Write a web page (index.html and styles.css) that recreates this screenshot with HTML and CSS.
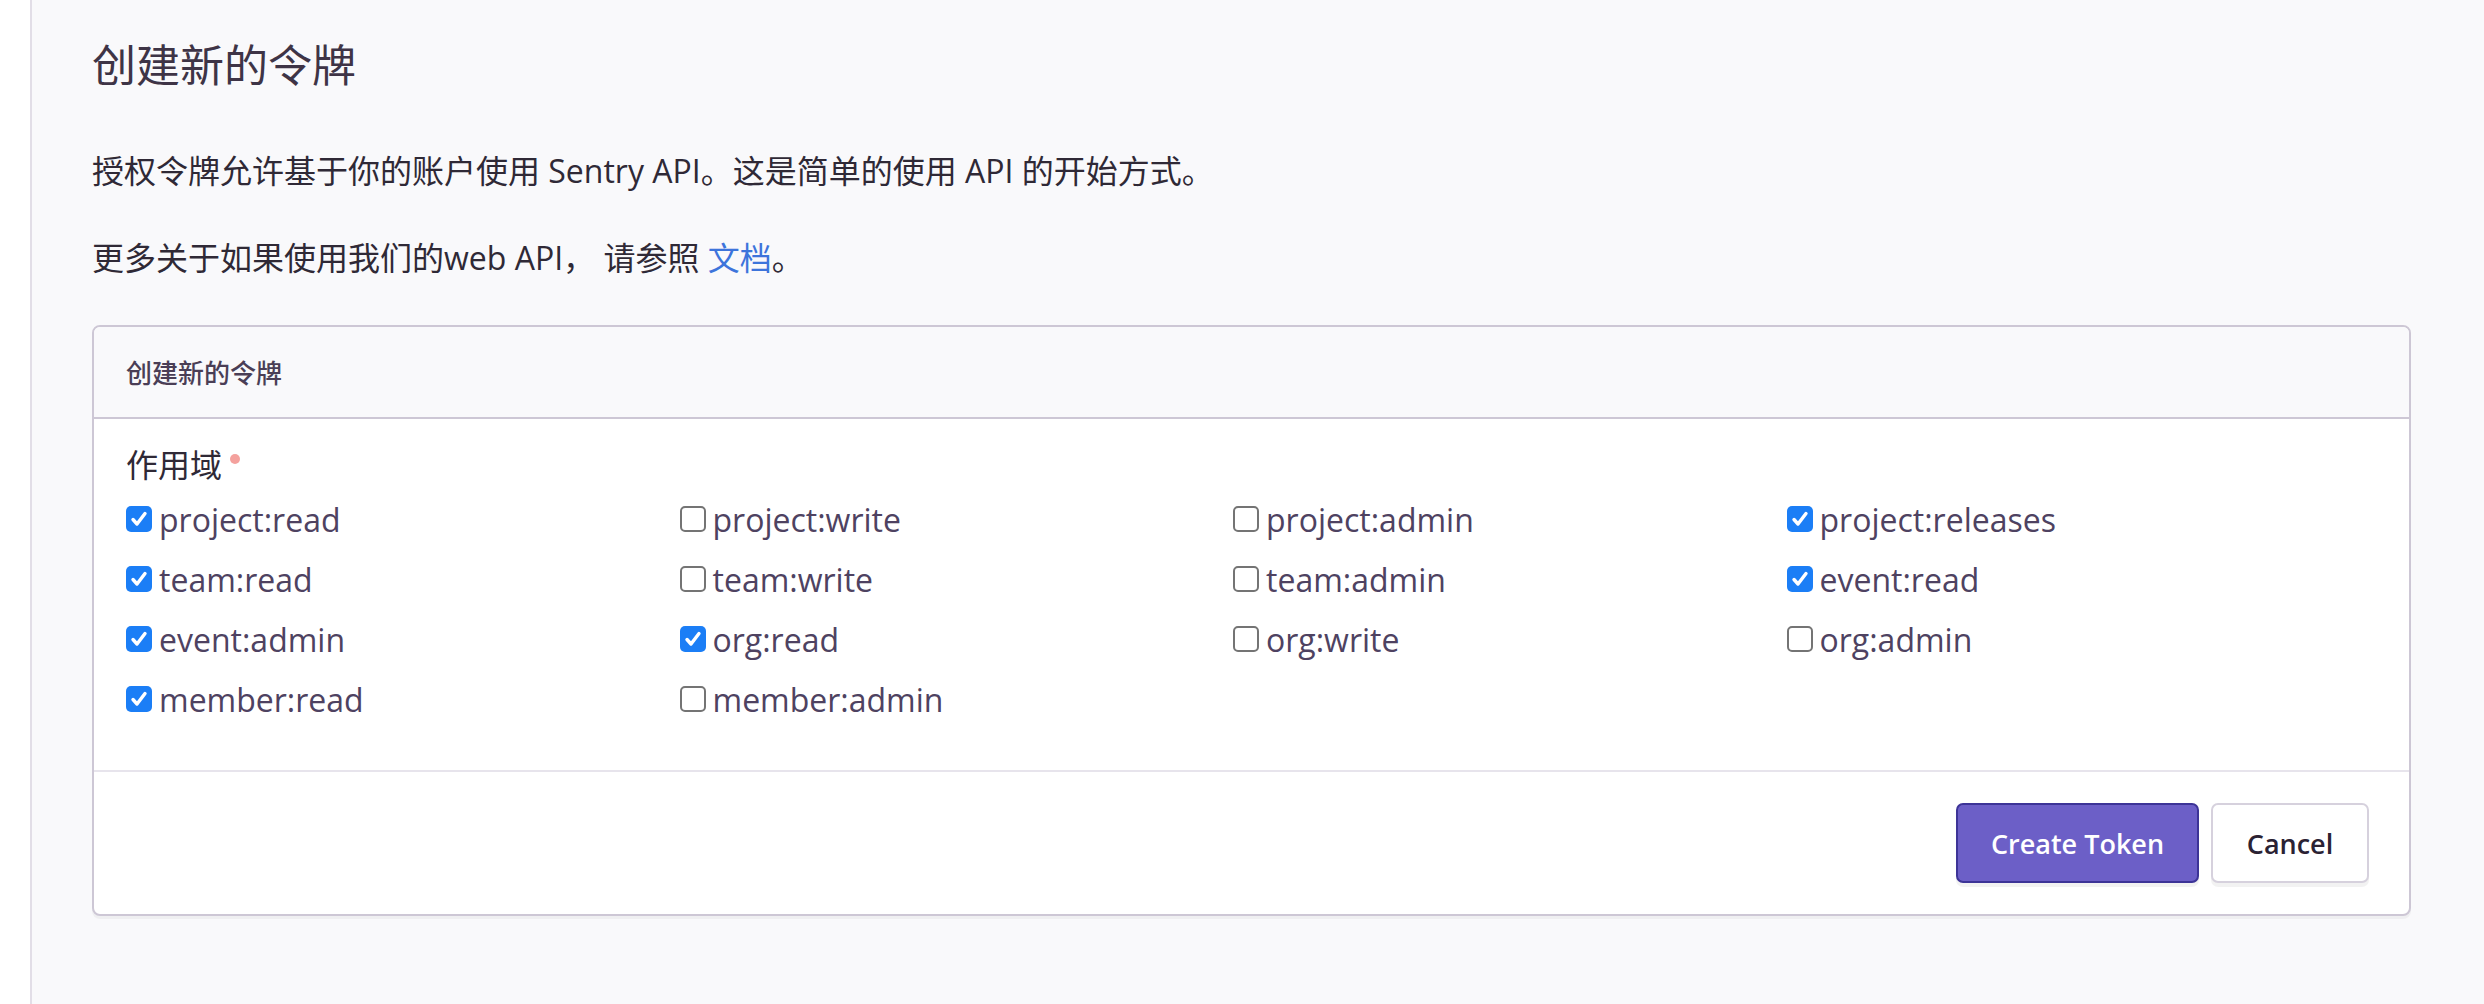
FILE: index.html
```html
<!DOCTYPE html>
<html lang="zh-CN">
<head>
<meta charset="utf-8">
<title>创建新的令牌</title>
<link rel="stylesheet" href="styles.css">
</head>
<body>
<div class="layout">
  <div class="gutter"></div>
  <main class="main">
    <h1 class="page-title">创建新的令牌</h1>
    <p class="text">授权令牌允许基于你的账户使用 Sentry API。这是简单的使用 API 的开始方式。</p>
    <p class="text text-last">更多关于如果使用我们的web API， 请参照 <a class="link" href="#">文档</a>。</p>

    <section class="panel">
      <header class="panel-header">创建新的令牌</header>
      <div class="panel-body">
        <div class="field-label">作用域<span class="required"></span></div>
        <div class="scopes">
          <label class="scope"><span class="box checked"><svg viewBox="0 0 26 26"><path d="M7 13.5 L11 18 L19 7.5" /></svg></span>project:read</label>
          <label class="scope"><span class="box"></span>project:write</label>
          <label class="scope"><span class="box"></span>project:admin</label>
          <label class="scope"><span class="box checked"><svg viewBox="0 0 26 26"><path d="M7 13.5 L11 18 L19 7.5" /></svg></span>project:releases</label>

          <label class="scope"><span class="box checked"><svg viewBox="0 0 26 26"><path d="M7 13.5 L11 18 L19 7.5" /></svg></span>team:read</label>
          <label class="scope"><span class="box"></span>team:write</label>
          <label class="scope"><span class="box"></span>team:admin</label>
          <label class="scope"><span class="box checked"><svg viewBox="0 0 26 26"><path d="M7 13.5 L11 18 L19 7.5" /></svg></span>event:read</label>

          <label class="scope"><span class="box checked"><svg viewBox="0 0 26 26"><path d="M7 13.5 L11 18 L19 7.5" /></svg></span>event:admin</label>
          <label class="scope"><span class="box checked"><svg viewBox="0 0 26 26"><path d="M7 13.5 L11 18 L19 7.5" /></svg></span>org:read</label>
          <label class="scope"><span class="box"></span>org:write</label>
          <label class="scope"><span class="box"></span>org:admin</label>

          <label class="scope"><span class="box checked"><svg viewBox="0 0 26 26"><path d="M7 13.5 L11 18 L19 7.5" /></svg></span>member:read</label>
          <label class="scope"><span class="box"></span>member:admin</label>
        </div>
      </div>
      <footer class="panel-footer">
        <button class="btn btn-primary" type="button">Create Token</button>
        <button class="btn btn-default" type="button">Cancel</button>
      </footer>
    </section>
  </main>
</div>
</body>
</html>
```

FILE: styles.css
```css
html, body {
  margin: 0;
  padding: 0;
  background: #ffffff;
}

body {
  font-family: "Open Sans", "Noto Sans CJK SC", sans-serif;
  color: #2f2936;
}

.layout {
  display: flex;
  min-height: 1004px;
}

.gutter {
  width: 30px;
  flex: none;
  background: #ffffff;
  border-right: 2px solid #e2dee7;
}

.main {
  flex: 1;
  background: #f9f9fb;
  padding: 43px 73px 0 60px;
}

.page-title {
  margin: 0 0 60px 0;
  font-size: 44px;
  line-height: 44px;
  font-weight: 400;
  color: #3e3446;
}

.text {
  margin: 0 0 39px 0;
  font-size: 32px;
  line-height: 48px;
  color: #2f2936;
}

.text-last {
  margin-bottom: 43px;
}

.link {
  color: #3d74db;
  text-decoration: none;
}

.panel {
  background: #ffffff;
  border: 2px solid #cdc7d5;
  border-radius: 8px;
  box-shadow: 0 3px 0 rgba(0, 0, 0, 0.04);
  overflow: hidden;
}

.panel-header {
  height: 90px;
  display: flex;
  align-items: center;
  padding: 0 32px;
  background: #f9f9fb;
  border-bottom: 2px solid #cdc7d5;
  font-size: 26px;
  font-weight: 500;
  color: #4a3e56;
}

.panel-body {
  padding: 21px 32px 41px 32px;
}

.field-label {
  font-size: 32px;
  line-height: 49px;
  height: 49px;
  color: #2f2936;
  display: flex;
  align-items: center;
}

.required {
  width: 10px;
  height: 10px;
  border-radius: 50%;
  background: #f4a19d;
  margin-left: 8px;
  align-self: flex-start;
  margin-top: 14px;
}

.scopes {
  display: grid;
  grid-template-columns: repeat(4, 553.5px);
  grid-auto-rows: 60px;
}

.scope {
  display: flex;
  align-items: center;
  font-size: 32px;
  color: #4e4261;
  white-space: nowrap;
}

.box {
  width: 26px;
  height: 26px;
  box-sizing: border-box;
  border: 2px solid #747474;
  border-radius: 5px;
  background: #ffffff;
  margin-right: 7px;
  flex: none;
  display: flex;
  align-items: center;
  justify-content: center;
}

.box.checked {
  border: none;
  background: #1b7ef6;
}

.box svg {
  width: 26px;
  height: 26px;
}

.box svg path {
  fill: none;
  stroke: #ffffff;
  stroke-width: 3.4;
  stroke-linecap: round;
  stroke-linejoin: round;
}

.panel-footer {
  display: flex;
  justify-content: flex-end;
  gap: 12px;
  padding: 31px 40px 31px 32px;
  border-top: 2px solid #e7e4ec;
}

.btn {
  height: 80px;
  box-sizing: border-box;
  border-radius: 7px;
  font-family: "Open Sans", "Noto Sans CJK SC", sans-serif;
  font-size: 27px;
  font-weight: 600;
  cursor: pointer;
  box-shadow: 0 4px 0 rgba(0, 0, 0, 0.05);
}

.btn-primary {
  width: 243px;
  background: #6c5fc7;
  border: 2px solid #3d3497;
  color: #ffffff;
}

.btn-default {
  width: 158px;
  background: #ffffff;
  border: 2px solid #d6d1dd;
  color: #2b2233;
}
```
